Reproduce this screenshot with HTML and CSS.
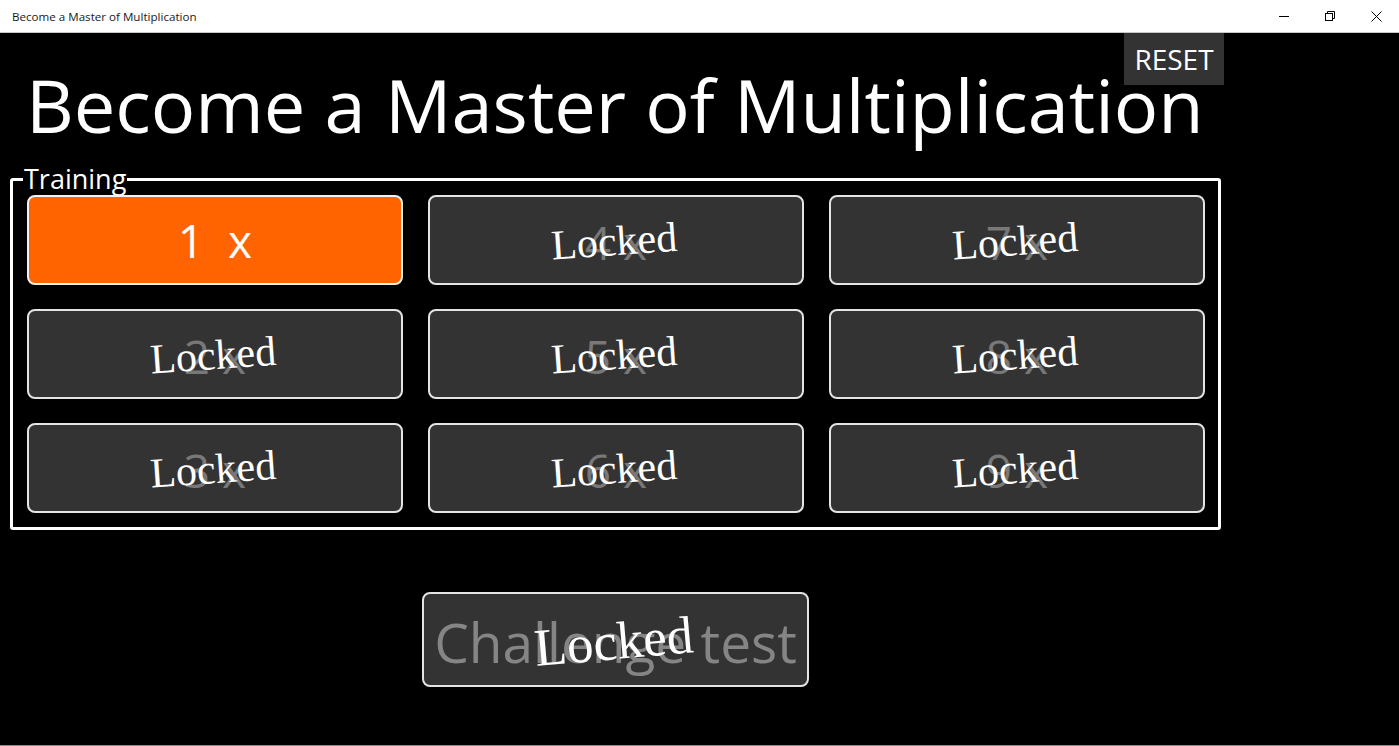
FILE: index.html
```html
<!DOCTYPE html>
<html lang="en">
<head>
  <meta charset="UTF-8">
  <title>Become a Master of Multiplication</title>
  <link rel="stylesheet" href="styles.css">
</head>
<body>
  <div class="titlebar">
    <span class="window-title">Become a Master of Multiplication</span>
    <div class="window-controls">
      <span class="ctl">
        <svg width="10" height="10" viewBox="0 0 10 10"><path d="M0 5.5h10" stroke="#000" stroke-width="1"/></svg>
      </span>
      <span class="ctl">
        <svg width="10" height="10" viewBox="0 0 10 10" fill="none" stroke="#000" stroke-width="1">
          <rect x="0.5" y="2.5" width="7" height="7"/>
          <path d="M2.5 2.5V0.5h7v7h-2"/>
        </svg>
      </span>
      <span class="ctl">
        <svg width="11" height="11" viewBox="0 0 11 11"><path d="M0.5 0.5l10 10M10.5 0.5l-10 10" stroke="#000" stroke-width="1"/></svg>
      </span>
    </div>
  </div>

  <main class="app">
    <div class="content">
      <button class="reset">RESET</button>
      <h1>Become a Master of Multiplication</h1>

      <fieldset class="training">
        <legend>Training</legend>
        <div class="tables">
          <button class="table-btn active">1&nbsp;&nbsp;x</button>
          <button class="table-btn locked"><span class="label">2 x</span><span class="lock">Locked</span></button>
          <button class="table-btn locked"><span class="label">3 x</span><span class="lock">Locked</span></button>
          <button class="table-btn locked"><span class="label">4 x</span><span class="lock">Locked</span></button>
          <button class="table-btn locked"><span class="label">5 x</span><span class="lock">Locked</span></button>
          <button class="table-btn locked"><span class="label">6 x</span><span class="lock">Locked</span></button>
          <button class="table-btn locked"><span class="label">7 x</span><span class="lock">Locked</span></button>
          <button class="table-btn locked"><span class="label">8 x</span><span class="lock">Locked</span></button>
          <button class="table-btn locked"><span class="label">9 x</span><span class="lock">Locked</span></button>
        </div>
      </fieldset>

      <div class="challenge-row">
        <button class="challenge locked"><span class="label">Challenge test</span><span class="lock">Locked</span></button>
      </div>
    </div>
  </main>
</body>
</html>
```

FILE: styles.css
```css
body {
  margin: 0;
  font-family: "Open Sans", "Noto Sans", sans-serif;
  background: #000;
  overflow: hidden;
}
button {
  font-family: inherit;
  cursor: pointer;
}
.titlebar {
  height: 32px;
  background: #fff;
  border-bottom: 1px solid #c8c8c8;
  display: flex;
  align-items: center;
  justify-content: space-between;
}
.window-title {
  font-size: 11.6px;
  color: #1a1a1a;
  padding-left: 12px;
}
.window-controls {
  display: flex;
  height: 100%;
}
.ctl {
  width: 46px;
  display: flex;
  align-items: center;
  justify-content: center;
}
.app {
  height: 712px;
  border-bottom: 1px solid #8c8c8c;
  color: #fff;
}
.content {
  position: relative;
  width: 1224px;
}
.reset {
  position: absolute;
  top: 0;
  right: 0;
  width: 100px;
  height: 52px;
  border: none;
  background: #333;
  color: #fff;
  font-size: 28px;
  padding: 0;
}
h1 {
  margin: 0 0 0 26px;
  padding-top: 30px;
  font-size: 74px;
  font-weight: normal;
  line-height: 84px;
}
.training {
  margin: 18px 0 0 10px;
  box-sizing: border-box;
  width: 1211px;
  border: 3px solid #fff;
  border-radius: 3px;
  padding: 2px 13px 14px 14px;
}
.training legend {
  font-size: 27px;
  line-height: 28px;
  padding: 0 1px;
  margin-left: -4px;
}
.tables {
  display: grid;
  grid-template-columns: repeat(3, 376px);
  grid-template-rows: repeat(3, 90px);
  grid-auto-flow: column;
  column-gap: 25px;
  row-gap: 24px;
}
.table-btn {
  position: relative;
  border: 2px solid #e4e4e4;
  border-radius: 8px;
  background: #333;
  color: #fff;
  font-size: 46px;
  padding: 0;
  white-space: pre;
}
.table-btn.active {
  background: #ff6400;
  border-color: #f2f2f2;
}
.label {
  color: #787878;
  position: relative;
  top: 2px;
}
.lock {
  position: absolute;
  inset: 0;
  display: flex;
  align-items: center;
  justify-content: center;
  font-family: "Liberation Serif", "Times New Roman", serif;
  font-size: 42px;
  color: #fff;
  transform: rotate(-4deg);
  padding-top: 2px;
  padding-right: 4px;
}
.challenge-row {
  display: flex;
  justify-content: center;
  margin: 62px 0 0 10px;
  width: 1211px;
}
.challenge {
  position: relative;
  width: 387px;
  height: 95px;
  border: 2px solid #e4e4e4;
  border-radius: 8px;
  background: #333;
  padding: 0;
  font-size: 55px;
}
.challenge .label {
  color: #858585;
  top: 2px;
}
.challenge .lock {
  font-size: 53px;
  transform: rotate(-5deg);
}
```
